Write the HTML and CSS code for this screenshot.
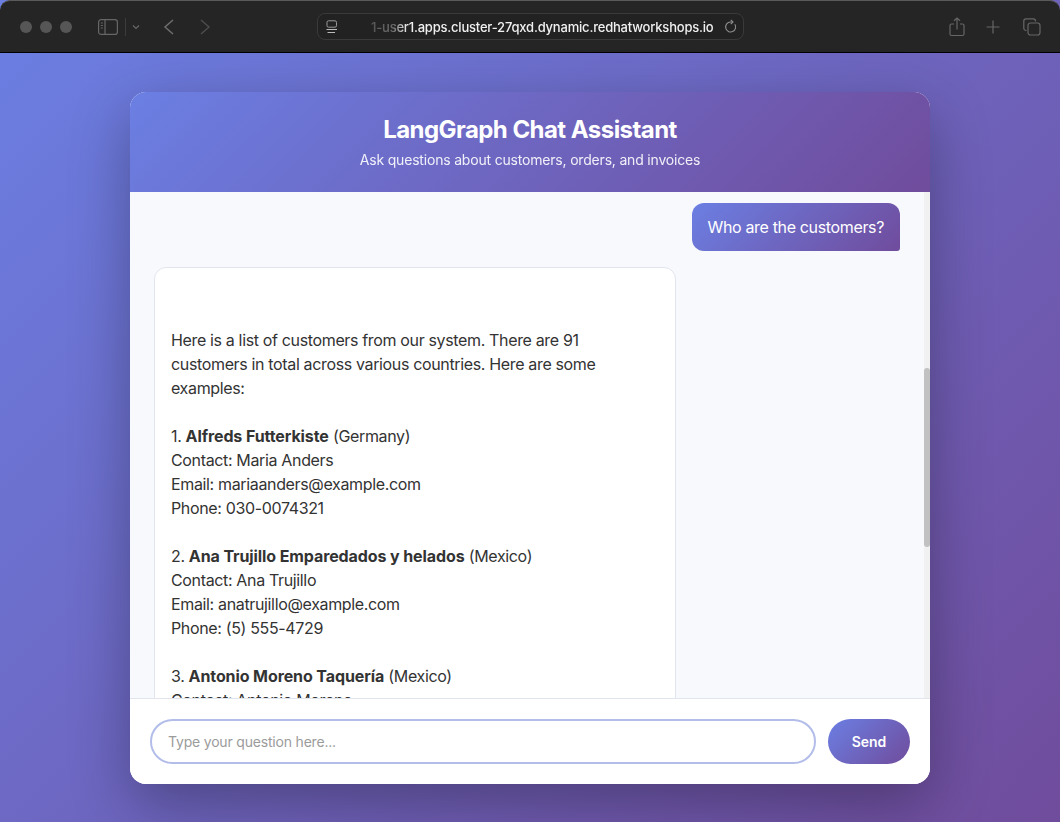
FILE: index.html
```html
<!DOCTYPE html>
<html lang="en">
  <head>
    <meta charset="UTF-8" />
    <title>LangGraph Chat Assistant</title>
    <link rel="stylesheet" href="styles.css">
  </head>
  <body>
    <div class="toolbar">
      <div class="traffic">
        <span class="dot"></span>
        <span class="dot"></span>
        <span class="dot"></span>
      </div>
      <svg class="icon sidebar-icon" width="20" height="16" viewBox="0 0 20 16" fill="none" stroke="#666" stroke-width="1.2">
        <rect x="0.6" y="0.6" width="18.8" height="14.8" rx="2.5"/>
        <path d="M7 0.6V15.4"/>
        <path d="M2.8 4H4.8M2.8 6.5H4.8M2.8 9H4.8" stroke-width="1"/>
      </svg>
      <span class="tb-sep"></span>
      <svg class="icon chevron-down" width="8" height="6" viewBox="0 0 8 6" fill="none" stroke="#666" stroke-width="1.2">
        <path d="M1 1.5L4 4.5L7 1.5"/>
      </svg>
      <svg class="icon back" width="12" height="16" viewBox="0 0 12 16" fill="none" stroke="#6e6e6e" stroke-width="1.5">
        <path d="M10 1L2 8L10 15"/>
      </svg>
      <svg class="icon forward" width="12" height="16" viewBox="0 0 12 16" fill="none" stroke="#4c4c4c" stroke-width="1.5">
        <path d="M2 1L10 8L2 15"/>
      </svg>
      <div class="urlbar">
        <svg class="icon page-icon" width="12" height="14" viewBox="0 0 12 14" fill="none" stroke="#9a9a9a" stroke-width="1">
          <rect x="1" y="0.8" width="9.5" height="6.4" rx="1.5"/>
          <path d="M0.5 9.5H11M1.5 12.5H9" stroke="#bbb"/>
        </svg>
        <span class="url">1-user1.apps.cluster-27qxd.dynamic.redhatworkshops.io</span>
        <svg class="icon reload" width="13" height="15" viewBox="0 0 13 15" fill="none" stroke="#8e8e8e" stroke-width="1.1">
          <path d="M10.8 5.2A5 5 0 1 1 6.5 3H8.5"/>
          <path d="M6.8 0.8L9 3L6.8 5.2"/>
        </svg>
      </div>
      <div class="tb-right">
        <svg class="icon" width="16" height="20" viewBox="0 0 16 20" fill="none" stroke="#666" stroke-width="1.2">
          <path d="M5 7H2.5A1.5 1.5 0 0 0 1 8.5V17A1.5 1.5 0 0 0 2.5 18.500H13.500A1.500 1.500 0 0 0 15 17V8.500A1.500 1.500 0 0 0 13.500 7H11"/>
          <path d="M8 12.500V1M5 3.800L8 1L11 3.800"/>
        </svg>
        <svg class="icon plus" width="14" height="14" viewBox="0 0 14 14" fill="none" stroke="#666" stroke-width="1.2">
          <path d="M7 0.500V13.500M0.500 7H13.500"/>
        </svg>
        <svg class="icon" width="18" height="18" viewBox="0 0 18 18" fill="none" stroke="#666" stroke-width="1.200">
          <path d="M3.500 12.500H3A2.200 2.200 0 0 1 0.800 10.300V3A2.200 2.200 0 0 1 3 0.800H10.300A2.200 2.200 0 0 1 12.500 3V3.500"/>
          <rect x="5" y="5" width="12" height="12" rx="2.500"/>
        </svg>
      </div>
    </div>

    <div class="page">
      <div class="chat-card">
        <div class="chat-header">
          <h1>LangGraph Chat Assistant</h1>
          <p>Ask questions about customers, orders, and invoices</p>
        </div>
        <div class="messages">
          <div class="msg-user">Who are the customers?</div>
          <div class="msg-bot">
            <div class="spacer"></div>
            Here is a list of customers from our system. There are 91 customers in total across various countries. Here are some examples:<br><br>
            1. <strong>Alfreds Futterkiste</strong> (Germany)<br>
            Contact: Maria Anders<br>
            Email: mariaanders@example.com<br>
            Phone: 030-0074321<br><br>
            2. <strong>Ana Trujillo Emparedados y helados</strong> (Mexico)<br>
            Contact: Ana Trujillo<br>
            Email: anatrujillo@example.com<br>
            Phone: (5) 555-4729<br><br>
            3. <strong>Antonio Moreno Taquería</strong> (Mexico)<br>
            Contact: Antonio Moreno
          </div>
          <div class="scroll-track"><div class="scroll-thumb"></div></div>
        </div>
        <div class="chat-input">
          <input type="text" placeholder="Type your question here...">
          <button class="send-btn">Send</button>
        </div>
      </div>
    </div>
  </body>
</html>
```

FILE: styles.css
```css
html,
body {
  width: 100%;
  height: 100%;
  margin: 0;
  padding: 0;
  overflow: hidden;
}
body {
  display: flex;
  flex-direction: column;
  font-family: Inter, "Liberation Sans", sans-serif;
  background: linear-gradient(135deg, #6b7fe3 0%, #704c9c 100%);
}
.toolbar {
  height: 53px;
  flex: none;
  display: flex;
  align-items: center;
  box-sizing: border-box;
  padding-left: 20px;
  background: #252525;
  border-top: 1px solid #5a5a5a;
  border-bottom: 1px solid #000;
  border-radius: 10px 10px 0 0;
}
.traffic {
  display: flex;
  gap: 8px;
}
.dot {
  width: 12px;
  height: 12px;
  border-radius: 50%;
  background: #565656;
}
.icon {
  flex: none;
  display: block;
}
.sidebar-icon {
  margin-left: 26px;
}
.tb-sep {
  width: 1px;
  height: 18px;
  margin-left: 7px;
  background: #3c3c3c;
}
.chevron-down {
  margin-left: 6px;
}
.back {
  margin-left: 23px;
}
.forward {
  margin-left: 24px;
}
.urlbar {
  width: 427px;
  height: 27px;
  margin-left: 106px;
  box-sizing: border-box;
  display: flex;
  align-items: center;
  padding: 0 6px 0 8px;
  border: 1px solid #3a3a3a;
  border-radius: 8px;
  background: #222;
}
.url {
  margin-left: 33px;
  flex: 1;
  font-size: 13px;
  font-weight: 500;
  letter-spacing: -0.2px;
  color: #f0f0f0;
  white-space: nowrap;
  -webkit-mask-image: linear-gradient(90deg, rgba(0, 0, 0, 0.25) 0, rgba(0, 0, 0, 0.35) 22px, #000 36px);
  mask-image: linear-gradient(90deg, rgba(0, 0, 0, 0.25) 0, rgba(0, 0, 0, 0.35) 22px, #000 36px);
}
.tb-right {
  display: flex;
  align-items: center;
  gap: 21px;
  margin-left: auto;
  padding-right: 19px;
}
.plus {
  margin-right: 2px;
}
.page {
  flex: 1;
  min-height: 0;
  display: flex;
  justify-content: center;
  padding-top: 39px;
}
.chat-card {
  width: 800px;
  height: 692px;
  display: flex;
  flex-direction: column;
  background: #fff;
  border-radius: 16px;
  overflow: hidden;
  box-shadow: 0 20px 60px rgba(0, 0, 0, 0.3);
}
.chat-header {
  height: 100px;
  flex: none;
  box-sizing: border-box;
  padding-top: 23px;
  text-align: center;
  color: #fff;
  background: linear-gradient(135deg, #6b7fe3 0%, #704c9c 100%);
}
.chat-header h1 {
  margin: 0;
  font-size: 24px;
  line-height: 29px;
  font-weight: 700;
  letter-spacing: -0.55px;
}
.chat-header p {
  margin: 7px 0 0;
  font-size: 14px;
  line-height: 17px;
  letter-spacing: -0.19px;
  opacity: 0.9;
}
.messages {
  position: relative;
  flex: 1;
  min-height: 0;
  overflow: hidden;
  display: flex;
  flex-direction: column;
  align-items: flex-start;
  gap: 16px;
  padding: 11px 30px 0 24px;
  background: #f8f9fd;
  font-size: 16px;
  line-height: 24px;
  letter-spacing: -0.35px;
}
.msg-user {
  align-self: flex-end;
  padding: 12px 16px;
  color: #fff;
  border-radius: 12px 12px 3px 12px;
  background: linear-gradient(135deg, #6b7fe3 0%, #704c9c 100%);
}
.msg-bot {
  flex: none;
  width: 522px;
  box-sizing: border-box;
  padding: 16px;
  color: #333;
  background: #fff;
  border: 1px solid #e1e5ee;
  border-radius: 12px;
}
.msg-bot strong {
  font-weight: 700;
  letter-spacing: -0.1px;
}
.spacer {
  height: 44px;
}
.scroll-track {
  position: absolute;
  top: 0;
  right: 0;
  bottom: 0;
  width: 6px;
  background: #f1f1f1;
}
.scroll-thumb {
  height: 179px;
  margin-top: 176px;
  border-radius: 3px;
  background: #c1c1c1;
}
.chat-input {
  height: 86px;
  flex: none;
  box-sizing: border-box;
  display: flex;
  align-items: center;
  gap: 12px;
  padding: 0 20px;
  background: #fff;
  border-top: 1px solid #e1e5ee;
}
.chat-input input {
  flex: 1;
  min-width: 0;
  height: 45px;
  box-sizing: border-box;
  padding: 0 16px;
  font-family: inherit;
  font-size: 14px;
  letter-spacing: -0.19px;
  border: 2px solid #b3bdea;
  border-radius: 25px;
  outline: none;
  background: #fff;
}
.chat-input input::placeholder {
  color: #9b9b9b;
}
.send-btn {
  width: 82px;
  height: 45px;
  padding: 0;
  font-family: inherit;
  font-size: 14px;
  font-weight: 600;
  color: #fff;
  border: none;
  border-radius: 25px;
  background: linear-gradient(135deg, #6b7fe3 0%, #704c9c 100%);
}
```
